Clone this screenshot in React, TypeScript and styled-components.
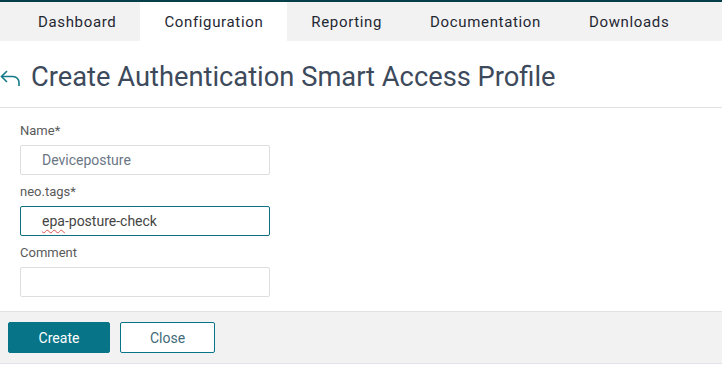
import styled, { createGlobalStyle } from 'styled-components'

const GlobalStyle = createGlobalStyle`
  html, body {
    margin: 0;
    padding: 0;
    background: #ffffff;
    font-family: Roboto, "Liberation Sans", sans-serif;
  }
  * {
    box-sizing: border-box;
  }
`

const Page = styled.div`
  width: 722px;
  height: 367px;
  overflow: hidden;
  display: flex;
  flex-direction: column;
  border-top: 2px solid #063f4b;
`

const TabBar = styled.nav`
  display: flex;
  height: 39px;
  background: #f2f2f2;
  padding-left: 14px;
`

const Tab = styled.div<{ $active?: boolean }>`
  display: flex;
  align-items: center;
  justify-content: center;
  padding: 0 24px;
  font-size: 15px;
  letter-spacing: 0.65px;
  color: #1f2733;
  background: ${(p) => (p.$active ? '#ffffff' : 'transparent')};
`

const Header = styled.header`
  display: flex;
  align-items: center;
  gap: 9px;
  height: 67px;
  padding-top: 5px;
  border-bottom: 1px solid #e1e1e1;
`

const BackIcon = styled.svg`
  width: 22px;
  height: 18px;
  margin-top: 3px;
  flex-shrink: 0;
`

const Title = styled.h1`
  margin: 0;
  font-size: 27.3px;
  font-weight: 400;
  color: #3d4a5c;
`

const Form = styled.form`
  display: flex;
  flex-direction: column;
  padding: 16px 20px 0;
  flex: 1;
`

const Label = styled.label`
  font-size: 13px;
  color: #5a5a5a;
  height: 21px;
  line-height: 14px;
`

const Input = styled.div<{ $focused?: boolean; $muted?: boolean }>`
  width: 250px;
  height: 30px;
  margin-bottom: 10px;
  border: 1px solid ${(p) => (p.$focused ? '#0f6f80' : '#dedede')};
  border-radius: 2px;
  padding-left: 21px;
  display: flex;
  align-items: center;
  font-size: 14px;
  color: ${(p) => (p.$muted ? '#6b7684' : '#454545')};
`

const Squiggle = styled.span`
  text-decoration: underline wavy #d9534f;
  text-decoration-thickness: 1px;
  text-underline-offset: 3px;
`

const Footer = styled.footer`
  height: 53px;
  background: #f2f2f2;
  border-top: 1px solid #e1e1e1;
  border-bottom: 1px solid #e0e4e8;
  display: flex;
  align-items: center;
  gap: 10px;
  padding: 0 8px;
  margin-bottom: 3px;
`

const Button = styled.button<{ $primary?: boolean }>`
  height: 31px;
  width: ${(p) => (p.$primary ? '102px' : '95px')};
  border-radius: 2px;
  font-family: Roboto, "Liberation Sans", sans-serif;
  font-size: 14px;
  border: 1px solid #087487;
  background: ${(p) => (p.$primary ? '#087487' : '#ffffff')};
  color: ${(p) => (p.$primary ? '#ffffff' : '#3f6a78')};
`

const tabs = ['Dashboard', 'Configuration', 'Reporting', 'Documentation', 'Downloads']

export default function App() {
  return (
    <Page>
      <GlobalStyle />
      <TabBar>
        {tabs.map((t) => (
          <Tab key={t} $active={t === 'Configuration'}>
            {t}
          </Tab>
        ))}
      </TabBar>
      <Header>
        <BackIcon viewBox="0 0 22 18" fill="none" stroke="#157a8a" strokeWidth="1.6">
          <path d="M7 2 L1.5 7.5 L7 13" />
          <path d="M1.5 7.5 H13 A6 6 0 0 1 19 13.5 V17" />
        </BackIcon>
        <Title>Create Authentication Smart Access Profile</Title>
      </Header>
      <Form>
        <Label>Name*</Label>
        <Input $muted>Deviceposture</Input>
        <Label>neo.tags*</Label>
        <Input $focused>
          <Squiggle>epa</Squiggle>-posture-check
        </Input>
        <Label>Comment</Label>
        <Input />
      </Form>
      <Footer>
        <Button $primary>Create</Button>
        <Button>Close</Button>
      </Footer>
    </Page>
  )
}
